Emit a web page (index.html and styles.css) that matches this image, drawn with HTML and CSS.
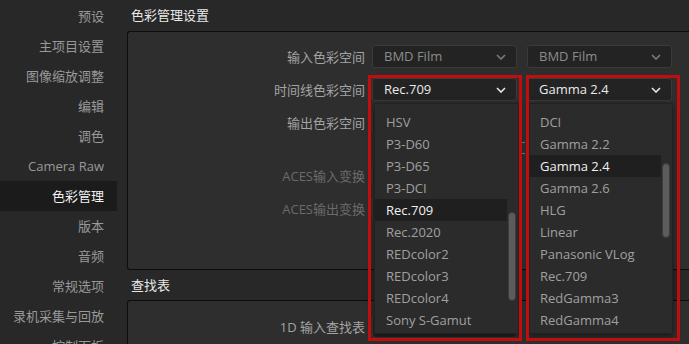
FILE: index.html
```html
<!DOCTYPE html>
<html lang="zh-CN">
<head>
    <meta charset="UTF-8">
    <title>色彩管理设置</title>
    <link rel="stylesheet" href="styles.css">
</head>
<body>
    <div class="app">
        <nav class="sidebar">
            <div class="nav-item">预设</div>
            <div class="nav-item">主项目设置</div>
            <div class="nav-item">图像缩放调整</div>
            <div class="nav-item">编辑</div>
            <div class="nav-item">调色</div>
            <div class="nav-item">Camera Raw</div>
            <div class="nav-item active">色彩管理</div>
            <div class="nav-item">版本</div>
            <div class="nav-item">音频</div>
            <div class="nav-item">常规选项</div>
            <div class="nav-item">录机采集与回放</div>
            <div class="nav-item">控制面板</div>
        </nav>

        <main class="main">
            <div class="section-title">色彩管理设置</div>
            <div class="panel panel-color">
                <div class="row">
                    <span class="row-label">输入色彩空间</span>
                    <div class="select muted">BMD Film <svg class="chevron" viewBox="0 0 10 6"><polyline points="1,1 5,5 9,1"/></svg></div>
                    <div class="select muted">BMD Film <svg class="chevron" viewBox="0 0 10 6"><polyline points="1,1 5,5 9,1"/></svg></div>
                </div>
                <div class="row">
                    <span class="row-label">时间线色彩空间</span>
                    <div class="select">Rec.709 <svg class="chevron" viewBox="0 0 10 6"><polyline points="1,1 5,5 9,1"/></svg></div>
                    <div class="select">Gamma 2.4 <svg class="chevron" viewBox="0 0 10 6"><polyline points="1,1 5,5 9,1"/></svg></div>
                </div>
                <!-- selects below sit under the open popups -->
                <div class="row">
                    <span class="row-label">输出色彩空间</span>
                    <div class="select"></div>
                    <div class="select"></div>
                </div>
                <div class="row row-check">
                    <span class="row-label"></span>
                    <div class="check-spacer"></div>
                    <span class="check-box"></span>
                </div>
                <div class="row">
                    <span class="row-label dim">ACES输入变换</span>
                    <div class="select muted"></div>
                </div>
                <div class="row">
                    <span class="row-label dim">ACES输出变换</span>
                    <div class="select muted"></div>
                </div>
            </div>

            <div class="section-title short">查找表</div>
            <div class="panel panel-lut">
                <div class="row">
                    <span class="row-label">1D 输入查找表</span>
                    <div class="select muted"></div>
                </div>
            </div>
        </main>

        <div class="popup popup-left">
            <div class="popup-item">HSV</div>
            <div class="popup-item">P3-D60</div>
            <div class="popup-item">P3-D65</div>
            <div class="popup-item">P3-DCI</div>
            <div class="popup-item current">Rec.709</div>
            <div class="popup-item">Rec.2020</div>
            <div class="popup-item">REDcolor2</div>
            <div class="popup-item">REDcolor3</div>
            <div class="popup-item">REDcolor4</div>
            <div class="popup-item">Sony S-Gamut</div>
            <div class="scroll-thumb"></div>
        </div>

        <div class="popup popup-right">
            <div class="popup-item">DCI</div>
            <div class="popup-item">Gamma 2.2</div>
            <div class="popup-item current">Gamma 2.4</div>
            <div class="popup-item">Gamma 2.6</div>
            <div class="popup-item">HLG</div>
            <div class="popup-item">Linear</div>
            <div class="popup-item">Panasonic VLog</div>
            <div class="popup-item">Rec.709</div>
            <div class="popup-item">RedGamma3</div>
            <div class="popup-item">RedGamma4</div>
            <div class="scroll-thumb"></div>
        </div>

        <div class="mark mark-left"></div>
        <div class="mark mark-right"></div>
    </div>
</body>
</html>
```

FILE: styles.css
```css
* {
    margin: 0;
    padding: 0;
    box-sizing: border-box;
}
body {
    background: #282828;
    font-family: "Open Sans", "Noto Sans CJK SC", sans-serif;
    font-size: 13px;
    color: #9c9c9c;
    overflow: hidden;
}
.app {
    position: relative;
    display: flex;
    width: 689px;
    height: 344px;
    overflow: hidden;
}
.sidebar {
    width: 127px;
    flex-shrink: 0;
    padding-top: 1px;
}
.nav-item {
    width: 117px;
    height: 30px;
    line-height: 30px;
    text-align: right;
    padding-right: 13px;
    color: #999;
    white-space: nowrap;
}
.nav-item.active {
    background: #1b1b1b;
    color: #f2f2f2;
}
.main {
    flex: 1;
}
.section-title {
    height: 31px;
    line-height: 31px;
    padding-left: 4px;
    color: #e8e8e8;
}
.section-title.short {
    height: 30px;
    line-height: 30px;
}
.panel {
    background: #2e2e2e;
    border: 1px solid #0d0d0d;
    border-right: none;
    border-radius: 3px 0 0 3px;
}
.panel-color {
    height: 239px;
    padding-top: 13px;
}
.panel-lut {
    height: 60px;
    padding-top: 14px;
}
.row {
    display: flex;
    align-items: center;
    gap: 10px;
    height: 23px;
    margin-bottom: 10px;
}
.row-label {
    width: 237px;
    margin-right: -3px;
    text-align: right;
    color: #a3a3a3;
    white-space: nowrap;
}
.row-label.dim {
    color: #6b6b6b;
}
.row-check {
    height: 20px;
    margin-top: -6px;
    margin-bottom: 6px;
}
.check-spacer {
    width: 135px;
}
.check-box {
    width: 8px;
    height: 12px;
    border: 1px solid #777;
    border-right: none;
}
.select {
    position: relative;
    width: 145px;
    height: 23px;
    line-height: 21px;
    padding-left: 11px;
    background: #232323;
    border: 1px solid #3a3a3a;
    border-radius: 3px;
    color: #eaeaea;
}
.select.muted {
    color: #8c8c8c;
}
.chevron {
    position: absolute;
    right: 10px;
    top: 8px;
    width: 10px;
    height: 6px;
    fill: none;
    stroke: #e6e6e6;
    stroke-width: 1.6;
}
.select.muted .chevron {
    stroke: #7a7a7a;
}
.popup {
    position: absolute;
    top: 103px;
    height: 231px;
    padding-top: 7px;
    background: #2b2b2b;
    border: 1px solid #222;
    box-shadow: 0 2px 6px rgba(0, 0, 0, 0.5);
}
.popup-left {
    left: 374px;
    width: 145px;
}
.popup-right {
    left: 529px;
    width: 144px;
}
.popup-item {
    height: 22px;
    line-height: 22px;
    margin-right: 11px;
    color: #a0a0a0;
    white-space: nowrap;
}
.popup-left .popup-item {
    padding-left: 11px;
}
.popup-right .popup-item {
    padding-left: 10px;
}
.popup-item.current {
    background: #1f1f1f;
    color: #f0f0f0;
}
.scroll-thumb {
    position: absolute;
    right: 2px;
    width: 8px;
    background: #5c5c5c;
    border: 1px solid #3c3c3c;
    border-radius: 4px;
}
.popup-left .scroll-thumb {
    top: 108px;
    height: 89px;
}
.popup-right .scroll-thumb {
    top: 59px;
    height: 75px;
}
.mark {
    position: absolute;
    top: 75px;
    width: 154px;
    height: 266px;
    border: 3px solid #c00d0d;
}
.mark-left {
    left: 368px;
}
.mark-right {
    left: 526px;
}
```
